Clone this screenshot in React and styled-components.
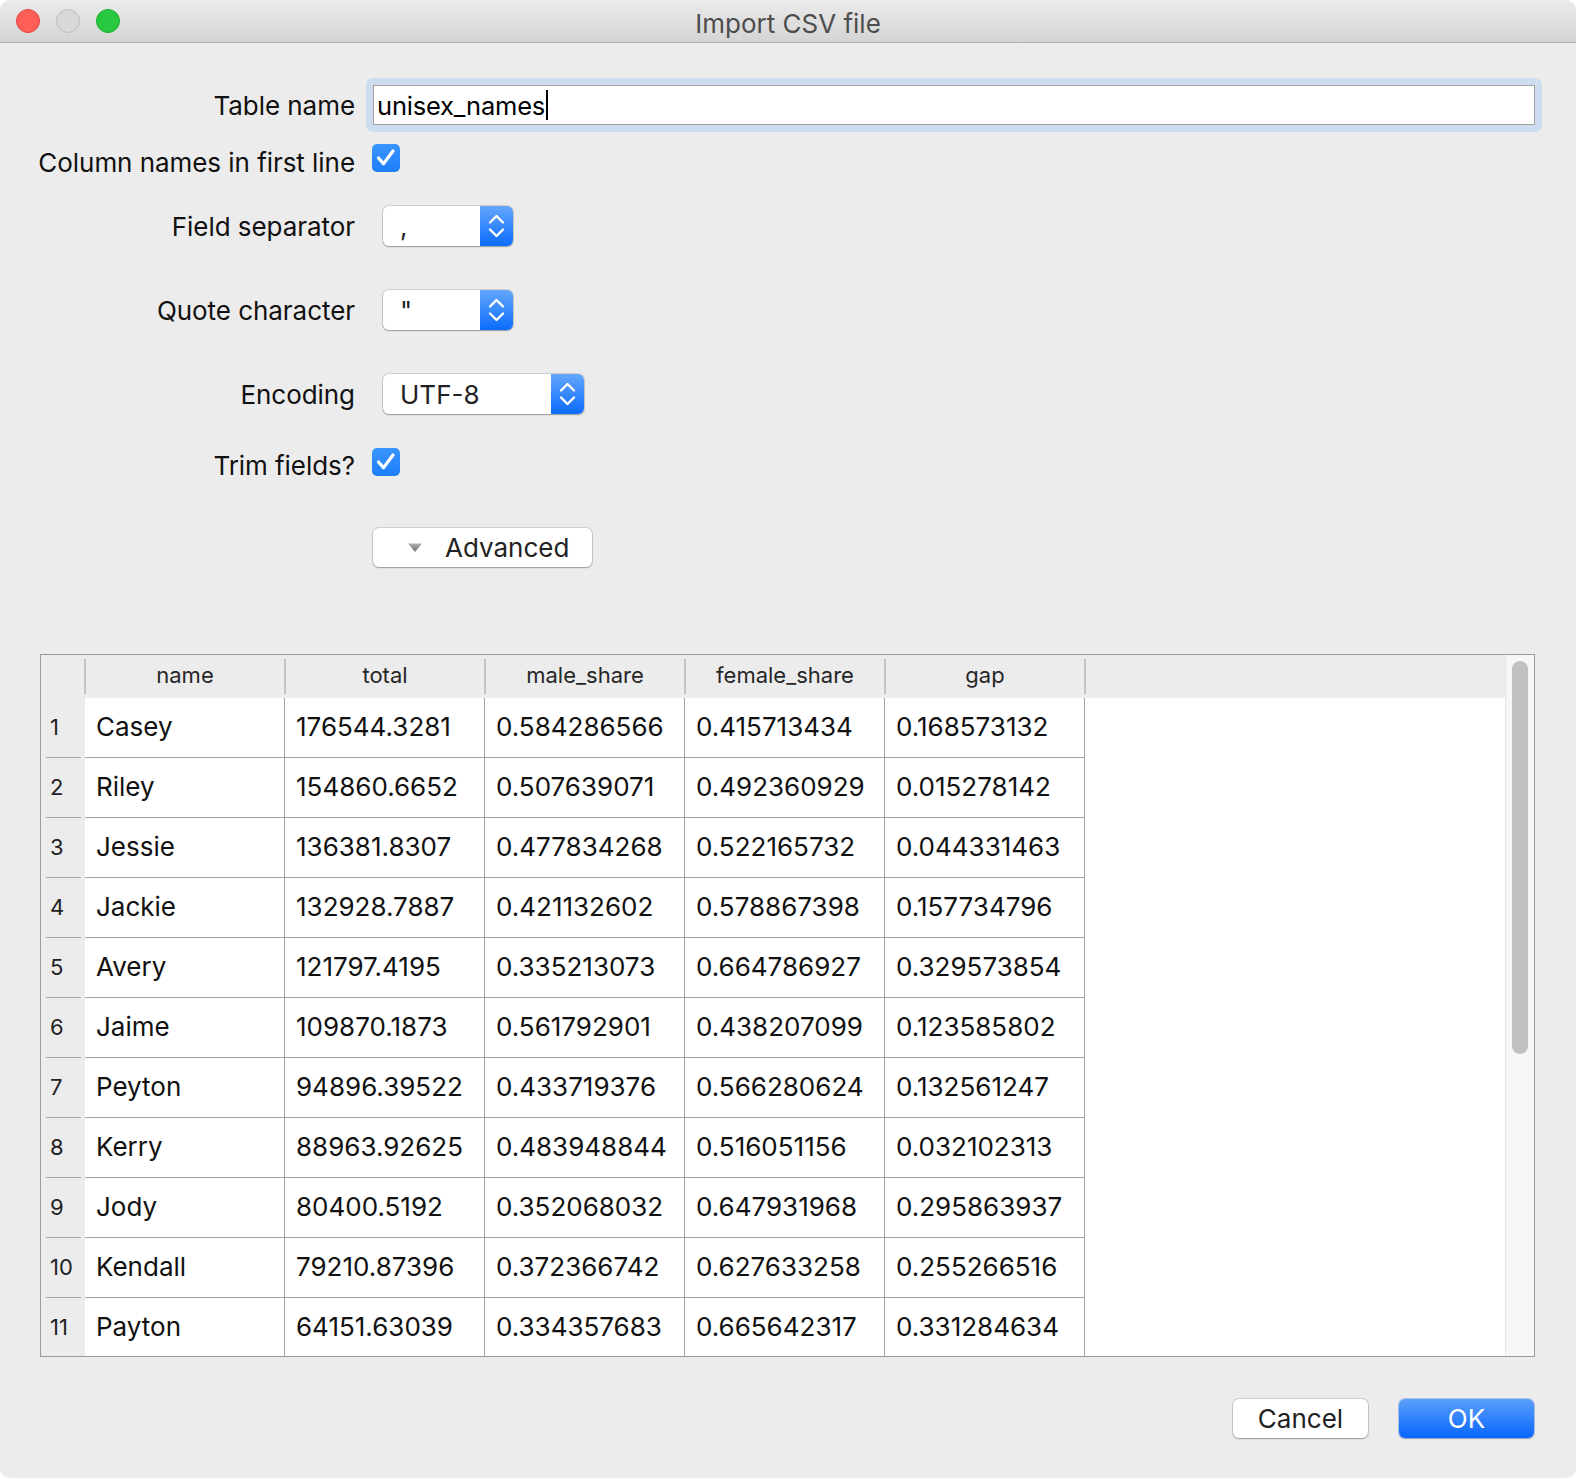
import React from 'react';
import styled, { createGlobalStyle } from 'styled-components';

const GlobalStyle = createGlobalStyle`
  html, body {
    margin: 0;
    padding: 0;
    background: #fff;
  }
  body {
    font-family: Inter, "Liberation Sans", sans-serif;
    -webkit-font-smoothing: antialiased;
  }
`;

const Window = styled.div`
  width: 1576px;
  height: 1478px;
  background: #ececec;
  border-radius: 10px;
  overflow: hidden;
  display: flex;
  flex-direction: column;
`;

const TitleBar = styled.div`
  height: 42px;
  flex: none;
  border-bottom: 1px solid #b3b3b3;
  background: linear-gradient(#ebebeb, #d4d4d4);
  display: grid;
  grid-template-columns: 1fr auto 1fr;
  align-items: center;
`;

const Lights = styled.div`
  display: flex;
  gap: 16px;
  padding-left: 16px;
`;

const Light = styled.span`
  width: 24px;
  height: 24px;
  border-radius: 50%;
  box-sizing: border-box;
  background: ${p => p.$fill};
  border: 1px solid ${p => p.$edge};
`;

const Title = styled.div`
  font-size: 26px;
  color: #4d4d4d;
  padding-top: 4px;
`;

const Form = styled.div`
  padding-top: 35px;
  display: flex;
  flex-direction: column;
`;

const Row = styled.div`
  height: ${p => p.$h}px;
  display: grid;
  grid-template-columns: 355px 1fr;
  align-items: center;
`;

const Label = styled.div`
  text-align: right;
  font-size: 26px;
  letter-spacing: -0.05px;
  color: #111;
  padding-top: ${p => p.$nudge || 0}px;
`;

const Control = styled.div`
  padding-left: ${p => p.$indent}px;
  display: flex;
  align-items: center;
`;

const FocusRing = styled.div`
  width: 1176px;
  height: 54px;
  box-sizing: border-box;
  padding: 7px;
  border-radius: 7px;
  background: #cddcee;
`;

const TextBox = styled.div`
  height: 40px;
  box-sizing: border-box;
  background: #fff;
  border: 1px solid #a2a2a2;
  display: flex;
  align-items: center;
  padding-left: 3px;
  font-size: 25.5px;
  letter-spacing: -0.2px;
  color: #000;
`;

const Caret = styled.span`
  width: 2px;
  height: 30px;
  background: #000;
  margin-left: 1px;
`;

const CheckBox = styled.div`
  width: 28px;
  height: 28px;
  border-radius: 5px;
  background: linear-gradient(#3a95fc, #1d7ef9);
  display: flex;
  align-items: center;
  justify-content: center;
`;

const Select = styled.div`
  width: ${p => p.$w}px;
  height: 40px;
  border-radius: 6px;
  background: #fff;
  box-shadow: 0 0 0 1px rgba(0, 0, 0, 0.12), 0 1px 1.5px rgba(0, 0, 0, 0.25);
  display: flex;
  overflow: hidden;
`;

const SelectValue = styled.div`
  flex: 1;
  padding-left: 17px;
  font-size: 26px;
  color: #222;
  display: flex;
  align-items: center;
`;

const Stepper = styled.div`
  width: 33px;
  background: linear-gradient(#64a6fb, #0b6cfd);
  display: flex;
  align-items: center;
  justify-content: center;
`;

const PushButton = styled.button`
  width: ${p => p.$w}px;
  height: 39px;
  border: none;
  border-radius: 6px;
  font-family: inherit;
  font-size: 26px;
  display: flex;
  align-items: center;
  justify-content: ${p => (p.$lead ? 'flex-start' : 'center')};
  gap: 22px;
  padding: 0 0 0 ${p => p.$lead || 0}px;
  color: ${p => (p.$primary ? '#fff' : '#222')};
  background: ${p => (p.$primary ? 'linear-gradient(#5a9ff9, #0866fe)' : '#fff')};
  box-shadow: ${p =>
    p.$primary
      ? '0 0 0 1px rgba(0, 80, 220, 0.25), 0 1px 1.5px rgba(0, 0, 0, 0.2)'
      : '0 0 0 1px rgba(0, 0, 0, 0.12), 0 1px 1.5px rgba(0, 0, 0, 0.25)'};
`;

const TableFrame = styled.div`
  margin: 48px 41px 0 40px;
  height: 703px;
  box-sizing: border-box;
  border: 1px solid #9c9c9c;
  display: flex;
  background: #fff;
  overflow: hidden;
`;

const GridArea = styled.div`
  flex: 1;
  display: flex;
  flex-direction: column;
  overflow: hidden;
`;

const HeaderRow = styled.div`
  height: 43px;
  flex: none;
  display: flex;
  background: #ececec;
`;

const HeadCell = styled.div`
  width: ${p => p.$w}px;
  flex: none;
  position: relative;
  display: flex;
  align-items: center;
  justify-content: center;
  padding-bottom: 3px;
  box-sizing: border-box;
  font-size: 22px;
  color: #262626;
  &::after {
    content: '';
    position: absolute;
    right: -1px;
    top: 4px;
    bottom: 4px;
    width: 2px;
    background: #c4c4c4;
  }
`;

const BodyRow = styled.div`
  height: 60px;
  flex: none;
  display: flex;
`;

const RowHead = styled.div`
  width: 44px;
  flex: none;
  background: #ececec;
  position: relative;
  display: flex;
  align-items: center;
  padding: 0 0 3px 9px;
  box-sizing: border-box;
  font-size: 22px;
  color: #222;
  &::after {
    content: '';
    position: absolute;
    left: 5px;
    right: 4px;
    bottom: 0;
    height: 1px;
    background: #a8a8a8;
  }
`;

const Cell = styled.div`
  width: 200px;
  flex: none;
  box-sizing: border-box;
  border-right: 1px solid #a3a3a3;
  border-bottom: 1px solid #a3a3a3;
  display: flex;
  align-items: center;
  padding: 0 0 3px 11px;
  font-size: 26px;
  color: #111;
`;

const ScrollTrack = styled.div`
  width: 29px;
  flex: none;
  box-sizing: border-box;
  background: #f6f6f6;
  border-left: 1px solid #e4e4e4;
  padding: 6px 6px 0 6px;
`;

const Thumb = styled.div`
  height: 393px;
  border-radius: 9px;
  background: #c1c1c1;
`;

const Footer = styled.div`
  display: flex;
  justify-content: flex-end;
  gap: 31px;
  padding: 42px 42px 0 0;
`;

const Check = () => (
  <svg width="28" height="28" viewBox="0 0 28 28">
    <path d="M6.5 14 L11.5 19.8 L21 7" fill="none" stroke="#fff" strokeWidth="3.2" strokeLinecap="round" strokeLinejoin="round" />
  </svg>
);

const Chevrons = () => (
  <svg width="17" height="26" viewBox="0 0 17 26">
    <path d="M2 9.5 L8.5 3 L15 9.5" fill="none" stroke="#fff" strokeWidth="2.4" strokeLinecap="round" strokeLinejoin="round" />
    <path d="M2 16.5 L8.5 23 L15 16.5" fill="none" stroke="#fff" strokeWidth="2.4" strokeLinecap="round" strokeLinejoin="round" />
  </svg>
);

const Disclosure = () => (
  <svg width="16" height="11" viewBox="0 0 16 11">
    <defs>
      <linearGradient id="disc" x1="0" y1="0" x2="0" y2="1">
        <stop offset="0" stopColor="#b0b0b0" />
        <stop offset="1" stopColor="#6e6e6e" />
      </linearGradient>
    </defs>
    <path d="M1 1.5 L15 1.5 L8 10 Z" fill="url(#disc)" />
  </svg>
);

const columns = ['name', 'total', 'male_share', 'female_share', 'gap'];

const rows = [
  ['Casey', '176544.3281', '0.584286566', '0.415713434', '0.168573132'],
  ['Riley', '154860.6652', '0.507639071', '0.492360929', '0.015278142'],
  ['Jessie', '136381.8307', '0.477834268', '0.522165732', '0.044331463'],
  ['Jackie', '132928.7887', '0.421132602', '0.578867398', '0.157734796'],
  ['Avery', '121797.4195', '0.335213073', '0.664786927', '0.329573854'],
  ['Jaime', '109870.1873', '0.561792901', '0.438207099', '0.123585802'],
  ['Peyton', '94896.39522', '0.433719376', '0.566280624', '0.132561247'],
  ['Kerry', '88963.92625', '0.483948844', '0.516051156', '0.032102313'],
  ['Jody', '80400.5192', '0.352068032', '0.647931968', '0.295863937'],
  ['Kendall', '79210.87396', '0.372366742', '0.627633258', '0.255266516'],
  ['Payton', '64151.63039', '0.334357683', '0.665642317', '0.331284634'],
];

const App = () => {
  return (
    <>
      <GlobalStyle />
      <Window>
        <TitleBar>
          <Lights>
            <Light $fill="#ff5f57" $edge="#e1463e" />
            <Light $fill="#d8d8d8" $edge="#bdbdbd" />
            <Light $fill="#28c941" $edge="#1dad2b" />
          </Lights>
          <Title>Import CSV file</Title>
          <div />
        </TitleBar>

        <Form>
          <Row $h={54}>
            <Label>Table name</Label>
            <Control $indent={11}>
              <FocusRing>
                <TextBox>
                  unisex_names
                  <Caret />
                </TextBox>
              </FocusRing>
            </Control>
          </Row>
          <Row $h={52}>
            <Label $nudge={8}>Column names in first line</Label>
            <Control $indent={17}>
              <CheckBox><Check /></CheckBox>
            </Control>
          </Row>
          <Row $h={84}>
            <Label>Field separator</Label>
            <Control $indent={28}>
              <Select $w={130}>
                <SelectValue>,</SelectValue>
                <Stepper><Chevrons /></Stepper>
              </Select>
            </Control>
          </Row>
          <Row $h={84}>
            <Label>Quote character</Label>
            <Control $indent={28}>
              <Select $w={130}>
                <SelectValue>"</SelectValue>
                <Stepper><Chevrons /></Stepper>
              </Select>
            </Control>
          </Row>
          <Row $h={84}>
            <Label>Encoding</Label>
            <Control $indent={28}>
              <Select $w={201}>
                <SelectValue>UTF-8</SelectValue>
                <Stepper><Chevrons /></Stepper>
              </Select>
            </Control>
          </Row>
          <Row $h={52}>
            <Label $nudge={6}>Trim fields?</Label>
            <Control $indent={17}>
              <CheckBox><Check /></CheckBox>
            </Control>
          </Row>
          <Row $h={118}>
            <div />
            <Control $indent={18}>
              <PushButton $w={219} $lead={34}>
                <Disclosure />
                Advanced
              </PushButton>
            </Control>
          </Row>
        </Form>

        <TableFrame>
          <GridArea>
            <HeaderRow>
              <HeadCell $w={44} />
              {columns.map(c => (
                <HeadCell key={c} $w={200}>{c}</HeadCell>
              ))}
            </HeaderRow>
            {rows.map((r, i) => (
              <BodyRow key={r[0]}>
                <RowHead>{i + 1}</RowHead>
                {r.map((v, j) => (
                  <Cell key={j}>{v}</Cell>
                ))}
              </BodyRow>
            ))}
          </GridArea>
          <ScrollTrack>
            <Thumb />
          </ScrollTrack>
        </TableFrame>

        <Footer>
          <PushButton $w={135}>Cancel</PushButton>
          <PushButton $w={135} $primary>OK</PushButton>
        </Footer>
      </Window>
    </>
  );
};

export default App;
